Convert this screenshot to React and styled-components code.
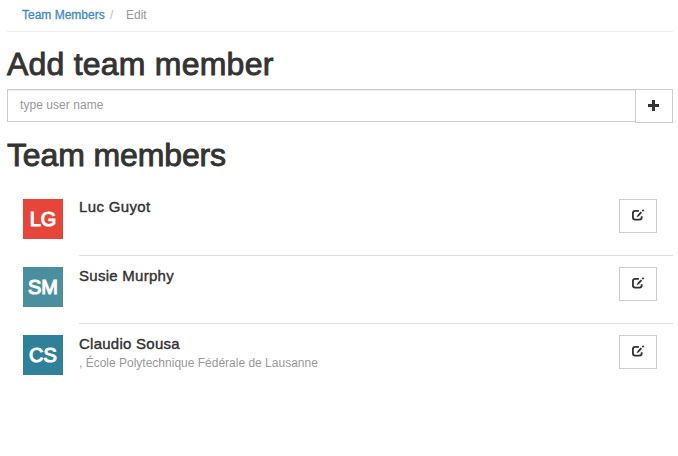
import React from "react";
import styled, { createGlobalStyle } from "styled-components";

const GlobalStyle = createGlobalStyle`
  *, *::before, *::after { box-sizing: border-box; }
  body {
    margin: 0;
    background: #fff;
    color: #333;
    font-family: "Liberation Sans", Arial, sans-serif;
    font-size: 12px;
  }
`;

const Page = styled.main`
  padding: 0 5px 0 7px;
  min-height: 456px;
`;

const Breadcrumb = styled.nav`
  display: flex;
  height: 32px;
  margin-bottom: 14px;
  padding: 6px 15px 0;
  border-bottom: 1px solid #eee;
  line-height: 18px;
  color: #999;
`;

const CrumbLink = styled.a`
  width: 88px;
  color: #428bca;
  text-decoration: none;
  -webkit-text-stroke: 0.3px #428bca;
`;

const Separator = styled.span`
  width: 16px;
  color: #bbb;
`;

const Heading = styled.h1`
  margin: 0;
  height: 36px;
  line-height: 36px;
  font-size: 32px;
  font-weight: 400;
  letter-spacing: ${(p) => p.$tracking};
  -webkit-text-stroke: 0.9px #333;
`;

const AddForm = styled.form`
  display: flex;
  align-items: flex-start;
  margin: 7px 0 14px;
`;

const UserInput = styled.input`
  flex: 1;
  min-width: 0;
  height: 33px;
  margin-right: -1px;
  padding: 0 12px 2px;
  border: 1px solid #ccc;
  border-radius: 0;
  box-shadow: inset 0 1px 1px rgba(0, 0, 0, 0.075);
  outline: 0;
  font: inherit;
  &::placeholder { color: #999; opacity: 1; letter-spacing: 0.05px; }
`;

const IconButton = styled.button`
  display: flex;
  flex: none;
  align-items: center;
  justify-content: center;
  width: 38px;
  height: 34px;
  padding: 0;
  border: 1px solid #ccc;
  background: #fff;
  color: #333;
`;

const MemberList = styled.ul`
  margin: 14px 0 0;
  padding: 0;
  list-style: none;
`;

const MemberBody = styled.div`
  display: flex;
  flex: 1;
  justify-content: space-between;
  padding: 11px 16px 0 0;
  border-top: 1px solid #ddd;
`;

const Name = styled.div`
  font-size: 15px;
  line-height: 17px;
  letter-spacing: ${(p) => p.$tracking};
  -webkit-text-stroke: 0.4px #333;
`;

const Member = styled.li`
  display: flex;
  height: 68px;
  padding-left: 16px;

  &:first-child ${MemberBody} { border-top-color: transparent; }
  &:first-child ${Name} { margin-top: -1px; }
`;

const Avatar = styled.div`
  flex: none;
  width: 40px;
  height: 40px;
  margin: 12px 16px 0 0;
  background: ${(p) => p.$color};
  color: #fff;
  font-size: 20px;
  line-height: 40px;
  text-align: center;
  -webkit-text-stroke: 1.1px #fff;
`;

const Affiliation = styled.div`
  margin-top: 3px;
  line-height: 17px;
  color: #999;
`;

const PlusIcon = () => (
  <svg width="12" height="12" viewBox="0 0 12 12" fill="currentColor" aria-hidden="true">
    <path d="M4 0h3v4h4v3H7v4H4V7H0V4h4z" />
  </svg>
);

const EditIcon = () => (
  <svg width="14" height="14" viewBox="0 0 14 14" fill="none" stroke="currentColor" aria-hidden="true">
    <path d="M7.9 1.9H4.2Q1.9 1.9 1.9 4.2v4.1q0 2.3 2.3 2.3h4.2q2.3 0 2.3-2.3V7.2" strokeWidth="1.8" />
    <path d="M6.9 6.9 10.4 3.1" strokeWidth="1.8" />
    <path d="M11.3 2.2 12.7.8" strokeWidth="1.8" />
    <path d="M5.6 8.1 6.3 6.2 7.5 7.4z" fill="currentColor" stroke="none" />
  </svg>
);

const members = [
  { initials: "LG", name: "Luc Guyot", color: "#e6463a", tracking: "0.35px" },
  { initials: "SM", name: "Susie Murphy", color: "#4b8f9f", tracking: "0.27px" },
  {
    initials: "CS",
    name: "Claudio Sousa",
    color: "#2f8099",
    tracking: "0.25px",
    affiliation: ", École Polytechnique Fédérale de Lausanne",
  },
];

export default function App() {
  return (
    <>
      <GlobalStyle />
      <Page>
        <Breadcrumb>
          <CrumbLink href="#">Team Members</CrumbLink>
          <Separator>/</Separator>
          <span>Edit</span>
        </Breadcrumb>
        <Heading $tracking="0.22px">Add team member</Heading>
        <AddForm>
          <UserInput placeholder="type user name" />
          <IconButton type="button" aria-label="Add"><PlusIcon /></IconButton>
        </AddForm>
        <Heading $tracking="-0.13px">Team members</Heading>
        <MemberList>
          {members.map((m) => (
            <Member key={m.initials}>
              <Avatar $color={m.color}>{m.initials}</Avatar>
              <MemberBody>
                <div>
                  <Name $tracking={m.tracking}>{m.name}</Name>
                  {m.affiliation && <Affiliation>{m.affiliation}</Affiliation>}
                </div>
                <IconButton type="button" aria-label="Edit"><EditIcon /></IconButton>
              </MemberBody>
            </Member>
          ))}
        </MemberList>
      </Page>
    </>
  );
}
